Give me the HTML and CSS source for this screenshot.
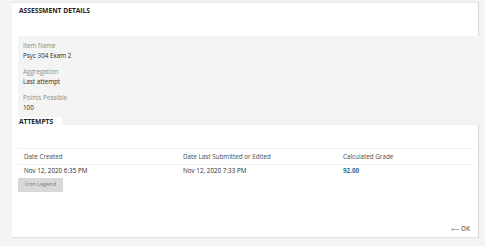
FILE: index.html
```html
<!DOCTYPE html>
<html>
<head>
<meta charset="utf-8">
<link rel="stylesheet" href="styles.css">
</head>
<body>
<div class="page">
  <section class="details">
    <div class="card-head"><h2 class="title">ASSESSMENT DETAILS</h2></div>
    <div class="details-body">
      <div class="field">
        <div class="label">Item Name</div>
        <div class="value">Psyc 304 Exam 2</div>
      </div>
      <div class="field">
        <div class="label">Aggregation</div>
        <div class="value">Last attempt</div>
      </div>
      <div class="field">
        <div class="label">Points Possible</div>
        <div class="value">100</div>
      </div>
    </div>
  </section>
  <section class="attempts">
    <div class="tab"><h2 class="title">ATTEMPTS</h2></div>
    <div class="card">
      <div class="table">
        <div class="row head">
          <div>Date Created</div>
          <div>Date Last Submitted or Edited</div>
          <div>Calculated Grade</div>
        </div>
        <div class="row data">
          <div>Nov 12, 2020 6:35 PM</div>
          <div>Nov 12, 2020 7:33 PM</div>
          <div class="grade">92.00</div>
        </div>
      </div>
      <button class="legend">Icon Legend</button>
      <div class="footer">
        <span class="ok"><svg class="arrow" width="8" height="5" viewBox="0 0 8 5"><path d="M8 2.5H0.8M2.3 1L0.8 2.5L2.3 4" fill="none" stroke="#8a8a8a" stroke-width="0.7"/></svg>OK</span>
      </div>
    </div>
  </section>
</div>
</body>
</html>
```

FILE: styles.css
```css
* { box-sizing: border-box; }
html, body { margin: 0; padding: 0; }
body {
  background: #f4f4f4;
  font-family: "Open Sans", "Liberation Sans", sans-serif;
  color: #2a2a2a;
  width: 485px;
  height: 246px;
  overflow: hidden;
}
.page {
  padding: 2px 7px 0 12px;
}
.title {
  margin: 0;
  font-size: 6.7px;
  line-height: 10px;
  font-weight: 700;
  color: #222;
}
.details {
  background: #fff;
  padding-left: 6px;
}
.card-head {
  height: 34px;
  margin-left: -6px;
  padding: 3px 0 0 7px;
  border-top: 1px solid #e9e9e9;
  box-shadow: 1px 0 1px rgba(0,0,0,0.1);
}
.details-body {
  background: #f4f4f4;
  margin-right: -7px;
  height: 81px;
  padding: 4.5px 0 0 5px;
}
.field { margin-bottom: 6.4px; }
.label {
  font-size: 6.3px;
  line-height: 10px;
  color: #8c8c8c;
}
.value {
  font-size: 6.3px;
  line-height: 10px;
  color: #2a2a2a;
}
.tab {
  background: #fff;
  width: 50px;
  height: 8px;
  padding-left: 7px;
}
.card {
  display: flex;
  flex-direction: column;
  background: #fff;
  height: 113px;
  padding: 23px 4px 3px 6px;
  border-bottom: 1px solid #e2e2e2;
  box-shadow: 1px 0 1px rgba(0,0,0,0.1);
}
.table { border-top: 1px solid #f0f0f0; }
.row {
  display: grid;
  grid-template-columns: 159px 160px 1fr;
  padding-left: 6px;
  font-size: 6.3px;
  color: #2a2a2a;
}
.row.head {
  line-height: 15.3px;
  border-bottom: 1px solid #f0f0f0;
  color: #4a4a4a;
}
.row.data { line-height: 12px; }
.grade { color: #1d6fa5; font-weight: 700; }
.legend {
  display: block;
  margin-top: 1px;
  width: 45px;
  height: 13.4px;
  padding: 0 0 0 7px;
  border: none;
  background: #d8d8d8;
  font-family: "Open Sans", "Liberation Sans", sans-serif;
  font-size: 5.5px;
  line-height: 13.4px;
  color: #7a7a7a;
  text-align: left;
}
.footer {
  margin-top: auto;
  display: flex;
  justify-content: flex-end;
  padding-right: 4px;
}
.ok {
  display: flex;
  align-items: center;
  gap: 2px;
  font-size: 6.3px;
  line-height: 10px;
  font-weight: 600;
  color: #6e6e6e;
}
.arrow { display: block; }
```
